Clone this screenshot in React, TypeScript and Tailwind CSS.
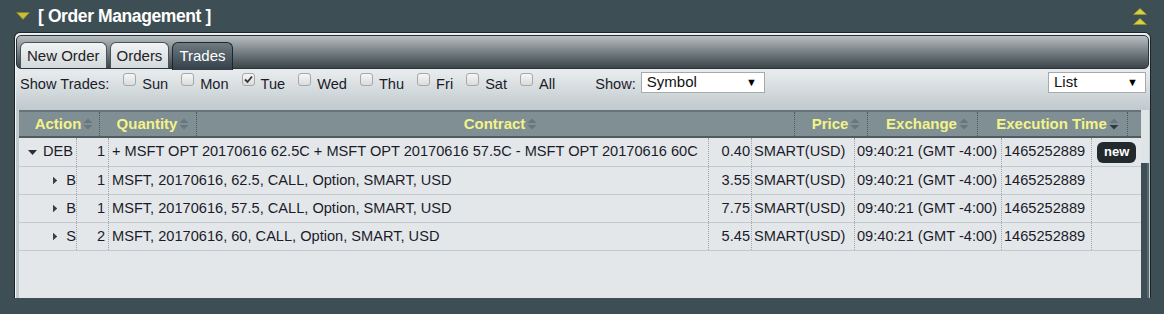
import React from 'react'

const headCols = [
  { label: 'Action', w: 'w-[81px]' },
  { label: 'Quantity', w: 'w-[97px]' },
  { label: 'Contract', w: 'w-[598px]' },
  { label: 'Price', w: 'w-[73px]' },
  { label: 'Exchange', w: 'w-[110px]' },
  { label: 'Execution Time', w: 'w-[150px]', active: true },
]

const rows = [
  {
    open: true,
    child: false,
    action: 'DEB',
    qty: '1',
    contract: '+ MSFT OPT 20170616 62.5C + MSFT OPT 20170616 57.5C - MSFT OPT 20170616 60C',
    price: '0.40',
    isNew: true,
  },
  { child: true, action: 'B', qty: '1', contract: 'MSFT, 20170616, 62.5, CALL, Option, SMART, USD', price: '3.55' },
  { child: true, action: 'B', qty: '1', contract: 'MSFT, 20170616, 57.5, CALL, Option, SMART, USD', price: '7.75' },
  { child: true, action: 'S', qty: '2', contract: 'MSFT, 20170616, 60, CALL, Option, SMART, USD', price: '5.45' },
]

const days = [
  { d: 'Sun' },
  { d: 'Mon' },
  { d: 'Tue', checked: true },
  { d: 'Wed' },
  { d: 'Thu' },
  { d: 'Fri' },
  { d: 'Sat' },
  { d: 'All' },
]

function SortIcon({ active }: { active?: boolean }) {
  return (
    <svg width="10" height="12" viewBox="0 0 10 12" className="ml-[2px] shrink-0">
      <path d="M5 0.5 L9.5 5 L0.5 5 Z" fill="#68777d" />
      <path d="M0.5 7 L9.5 7 L5 11.5 Z" fill={active ? '#2c3b48' : '#68777d'} />
    </svg>
  )
}

function Check({ checked }: { checked?: boolean }) {
  return (
    <span className="relative -top-[5px] w-[13px] h-[13px] rounded-[3px] border border-[#a3a8ab] bg-gradient-to-b from-[#f6f6f6] to-[#dcdcdc] flex items-center justify-center shrink-0">
      {checked && (
        <svg width="9" height="9" viewBox="0 0 9 9">
          <path d="M1 4.5 L3.5 7 L8 1.5" stroke="#333" strokeWidth="1.8" fill="none" />
        </svg>
      )}
    </span>
  )
}

function Select({ value, w }: { value: string; w: string }) {
  return (
    <div className={`${w} h-[21px] bg-white border border-[#a9a9a9] flex items-center pl-[5px] pr-[7px]`}>
      <span className="text-[15px] text-[#111]">{value}</span>
      <span className="ml-auto text-[11px] text-black">▼</span>
    </div>
  )
}

export default function App() {
  return (
    <div className="w-[1164px] h-[314px] overflow-hidden bg-[#3d4f55] font-['Liberation_Sans',Arial,sans-serif] text-[#1b1b2b]">
      <div className="h-[32px] flex items-center pl-[16px] pr-[17px]">
        <svg width="14" height="8" viewBox="0 0 14 8">
          <path d="M0.5 0.5 L13.5 0.5 L7 7.5 Z" fill="#c7bf3a" stroke="#8b8420" strokeWidth="0.8" />
        </svg>
        <span className="ml-[8px] text-white font-bold text-[17.5px] tracking-[-0.4px]">[ Order Management ]</span>
        <div className="ml-auto flex flex-col gap-[3px]">
          <svg width="14" height="7" viewBox="0 0 14 7">
            <path d="M7 0.5 L13.5 6.5 L0.5 6.5 Z" fill="#d9d144" stroke="#9b9325" strokeWidth="0.8" />
          </svg>
          <svg width="14" height="7" viewBox="0 0 14 7">
            <path d="M7 0.5 L13.5 6.5 L0.5 6.5 Z" fill="#d9d144" stroke="#9b9325" strokeWidth="0.8" />
          </svg>
        </div>
      </div>

      <div className="ml-[14px] w-[1137px] h-[266px] rounded-t-[6px] border border-b-0 border-[#1b2427] shadow-[inset_1px_1px_0_#f4f6f7] bg-gradient-to-b from-[#e6eaec] from-[40px] to-[#c1cacd] to-[76px] pt-[2px] px-[1px] flex flex-col">
        <div className="h-[34px] rounded-[5px] border border-[#2a3438] bg-gradient-to-b from-[#b8bfc2] to-[#3b454a] flex items-end pl-[3px] gap-[3px]">
          <div className="h-[26px] pt-[2px] px-[6px] rounded-t-[6px] border border-b-0 border-[#4a5458] bg-gradient-to-b from-[#f1f3f4] to-[#d3d9dc] text-[15px] flex items-center text-[#222]">
            New Order
          </div>
          <div className="h-[26px] pt-[2px] px-[6px] rounded-t-[6px] border border-b-0 border-[#4a5458] bg-gradient-to-b from-[#f1f3f4] to-[#d3d9dc] text-[15px] flex items-center text-[#222]">
            Orders
          </div>
          <div className="h-[28px] -mb-[2px] px-[6px] rounded-t-[6px] border border-b-0 border-[#1e282c] bg-gradient-to-b from-[#6f7b80] to-[#33404a] text-[15px] flex items-center text-white">
            Trades
          </div>
        </div>

        <div className="h-[26px] flex items-center pl-[4px] pr-[3px] text-[14.6px] pt-[5px]">
          <span className="text-[#1b1b2b]">Show Trades:</span>
          <div className="flex items-center ml-[14px]">
            {days.map((x, i) => (
              <div key={x.d} className={`flex items-center ${i > 0 ? 'ml-[13px]' : ''}`}>
                <Check checked={x.checked} />
                <span className="ml-[6px]">{x.d}</span>
              </div>
            ))}
          </div>
          <span className="ml-[40px]">Show:</span>
          <div className="ml-[5px] -mt-[4px]">
            <Select value="Symbol" w="w-[124px]" />
          </div>
          <div className="ml-auto -mt-[4px]">
            <Select value="List" w="w-[98px]" />
          </div>
        </div>

        <div className="mt-[15px] flex flex-1">
          <div className="ml-[3px] w-[1122px] bg-[#e3e7e9] flex flex-col">
            <div className="h-[28px] bg-[#7f8f93] border-t-[2px] border-[#65747a] border-b-[2px] border-b-[#4e5c62] flex">
              {headCols.map((c) => (
                <div
                  key={c.label}
                  className={`${c.w} shrink-0 h-full flex items-center justify-center pl-[10px] border-r border-dotted border-[#4c5a60] font-bold text-[15px] text-[#f3f38a]`}
                >
                  <span>{c.label}</span>
                  <SortIcon active={c.active} />
                </div>
              ))}
              <div className="flex-1" />
            </div>

            {rows.map((r, i) => (
              <div key={i} className={`${i === 0 ? 'h-[29px]' : 'h-[28px]'} border-b border-[#c4cacd] flex text-[14.6px] text-[#1b1b2b]`}>
                <div className="w-[58px] shrink-0 flex items-center border-r border-dotted border-[#9ea5a9] overflow-hidden">
                  {r.child ? (
                    <>
                      <svg width="5" height="9" viewBox="0 0 5 9" className="ml-[34px]">
                        <path d="M0 0 L5 4.5 L0 9 Z" fill="#3a3f44" />
                      </svg>
                      <span className="ml-[9px]">{r.action}</span>
                    </>
                  ) : (
                    <>
                      <svg width="9" height="5" viewBox="0 0 9 5" className="ml-[9px]">
                        <path d="M0 0 L9 0 L4.5 5 Z" fill="#2a2f34" />
                      </svg>
                      <span className="ml-[6px]">{r.action}</span>
                    </>
                  )}
                </div>
                <div className="w-[32px] shrink-0 flex items-center justify-end pr-[3px] border-r border-dotted border-[#9ea5a9]">{r.qty}</div>
                <div className="w-[600px] shrink-0 flex items-center pl-[3px] border-r border-dotted border-[#9ea5a9] whitespace-nowrap overflow-hidden">{r.contract}</div>
                <div className="w-[43px] shrink-0 flex items-center justify-end pr-[1px] border-r border-dotted border-[#9ea5a9]">{r.price}</div>
                <div className="w-[103px] shrink-0 flex items-center pl-[2px] border-r border-dotted border-[#9ea5a9] whitespace-nowrap">SMART(USD)</div>
                <div className="w-[147px] shrink-0 flex items-center pl-[2px] border-r border-dotted border-[#9ea5a9] whitespace-nowrap">09:40:21 (GMT -4:00)</div>
                <div className="w-[90px] shrink-0 flex items-center pl-[2px] border-r border-dotted border-[#9ea5a9]">1465252889</div>
                <div className="flex-1 flex items-center pl-[5px]">
                  {r.isNew && (
                    <span className="h-[21px] px-[7px] rounded-[6px] bg-[#232a2e] text-white font-bold text-[13px] flex items-center">new</span>
                  )}
                </div>
              </div>
            ))}
          </div>
          <div className="flex-1 flex flex-col">
            <div className="h-[53px] bg-[#dfe4e6]" />
            <div className="flex-1 bg-[#3d4f55] border-r-[2px] border-[#56676d]" />
          </div>
        </div>
      </div>
    </div>
  )
}
